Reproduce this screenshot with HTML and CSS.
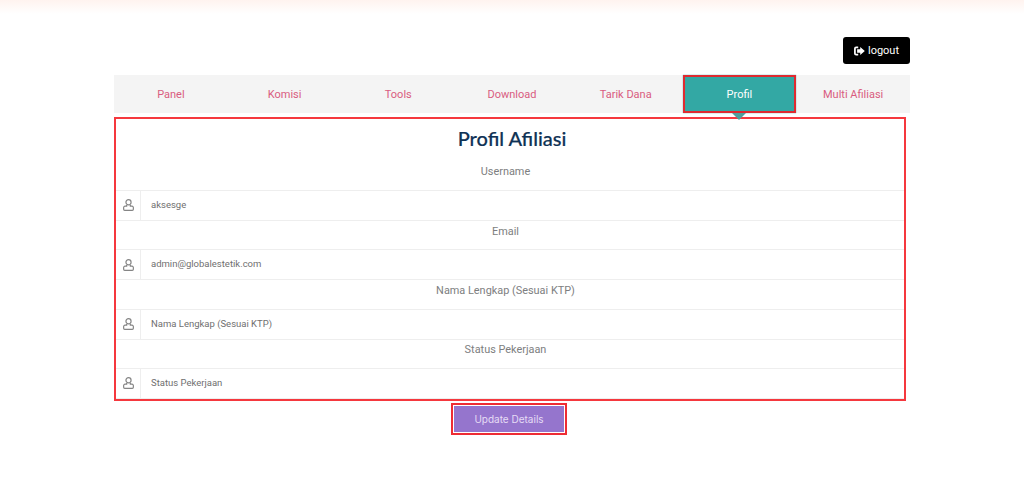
FILE: index.html
```html
<!DOCTYPE html>
<html lang="id">
<head>
<meta charset="utf-8">
<title>Profil Afiliasi</title>
<link rel="stylesheet" href="styles.css">
</head>
<body>
<div class="glow"></div>
<main class="page">
  <div class="top-row">
    <a class="logout" href="#">
      <svg class="logout-icon" viewBox="0 0 12 10" width="11" height="10"><path d="M4.600 1H2.300C1.400 1 1 1.500 1 2.300v5.400C1 8.500 1.400 9 2.300 9h2.300" fill="none" stroke="#fff" stroke-width="1.900"/><path d="M3.400 3h3.400V.6L11.800 5l-5 4.400V7H3.400z" fill="#fff"/></svg>
      logout
    </a>
  </div>
  <nav class="tabs">
    <a class="tab" href="#">Panel</a>
    <a class="tab" href="#">Komisi</a>
    <a class="tab" href="#">Tools</a>
    <a class="tab" href="#">Download</a>
    <a class="tab" href="#">Tarik Dana</a>
    <a class="tab tab-active" href="#">Profil</a>
    <a class="tab" href="#">Multi Afiliasi</a>
  </nav>
  <section class="panel">
    <h1 class="title">Profil Afiliasi</h1>
    <div class="field">
      <label class="label">Username</label>
      <div class="row">
        <span class="addon"><svg class="user" viewBox="0 0 12 13" width="11" height="12"><use href="#u"/></svg></span>
        <span class="value">aksesge</span>
      </div>
    </div>
    <div class="field">
      <label class="label">Email</label>
      <div class="row">
        <span class="addon"><svg class="user" viewBox="0 0 12 13" width="11" height="12"><use href="#u"/></svg></span>
        <span class="value">admin@globalestetik.com</span>
      </div>
    </div>
    <div class="field">
      <label class="label">Nama Lengkap (Sesuai KTP)</label>
      <div class="row">
        <span class="addon"><svg class="user" viewBox="0 0 12 13" width="11" height="12"><use href="#u"/></svg></span>
        <span class="value">Nama Lengkap (Sesuai KTP)</span>
      </div>
    </div>
    <div class="field">
      <label class="label">Status Pekerjaan</label>
      <div class="row">
        <span class="addon"><svg class="user" viewBox="0 0 12 13" width="11" height="12"><use href="#u"/></svg></span>
        <span class="value">Status Pekerjaan</span>
      </div>
    </div>
  </section>
  <div class="actions">
    <button class="update" type="button">Update Details</button>
  </div>
</main>
<svg class="defs" width="0" height="0"><defs><g id="u" fill="none" stroke="#858585" stroke-width="1.300"><circle cx="6" cy="3.500" r="2.800"/><path d="M4 6.400v1.400H2.200C1.300 7.800.7 8.400.7 9.300v1.900c0 .6.500 1.100 1.100 1.100h8.400c.6 0 1.100-.5 1.100-1.100V9.300c0-.9-.6-1.500-1.500-1.500H8V6.400"/></g></defs></svg>
</body>
</html>
```
FILE: styles.css
```css
* { box-sizing: border-box; }
html, body { margin: 0; padding: 0; }
body { background: #fff; font-family: "Roboto", "Liberation Sans", sans-serif; height: 487px; overflow: hidden; position: relative; }
.glow { position: absolute; left: 0; right: 0; top: 0; height: 14px; background: linear-gradient(#fff3ef, #fff); }
.defs { position: absolute; }
.page { position: relative; width: 796px; margin-left: 114px; padding-top: 37px; }
.top-row { display: flex; justify-content: flex-end; margin-bottom: 11px; }
.logout { display: flex; align-items: center; justify-content: center; gap: 3px; width: 67px; height: 27px; background: #000; color: #fff; border-radius: 3px; font-size: 11px; text-decoration: none; }
.tabs { display: grid; grid-template-columns: repeat(7, 1fr); height: 38px; background: #f4f4f4; margin-bottom: 4px; }
.tab { display: flex; align-items: center; justify-content: center; padding-top: 1px; color: #d95c80; font-size: 11px; text-decoration: none; }
.tab-active { position: relative; background: #33a8a4; color: #fff; outline: 2px solid #e02a30; outline-offset: -2px; box-shadow: 0 0 1px #33a8a4; }
.tab-active::after { content: ""; position: absolute; left: 50%; top: 100%; margin-left: -7px; border: 7px solid transparent; border-top-color: #4f9f9c; border-bottom: 0; }
.panel { width: 792px; height: 284px; border: 2px solid #f5383e; }
.title { margin: 0 0 4.700px; height: 38px; display: flex; align-items: center; justify-content: center; padding-left: 4px; font-family: "Lato", "Open Sans", sans-serif; font-weight: 500; font-size: 20px; line-height: 38px; color: #0f3255; -webkit-text-stroke: 0.200px #0f3255; }
.field { display: flex; flex-direction: column; }
.label { height: 28.300px; padding: 0 9px 8px 0; display: flex; align-items: center; justify-content: center; font-size: 10.900px; color: #7d7e80; }
.row { display: flex; height: 31px; border-top: 1px solid #eee; border-bottom: 1px solid #eee; }
.addon { width: 25px; display: flex; align-items: center; justify-content: center; border-right: 1px solid #eee; }
.user { display: block; }
.value { padding-left: 10px; font-size: 9.500px; line-height: 28px; color: #6f6f6f; }
.actions { display: flex; justify-content: center; margin-top: 2px; width: 790px; }
.update { width: 116px; height: 32px; padding: 0; background: #9575cd; color: #e6dcf5; border: 2px solid #ee2c34; box-shadow: inset 0 0 0 1px #fff; border-radius: 0; font-family: "Inter", "Open Sans", sans-serif; font-size: 10px; }
```
